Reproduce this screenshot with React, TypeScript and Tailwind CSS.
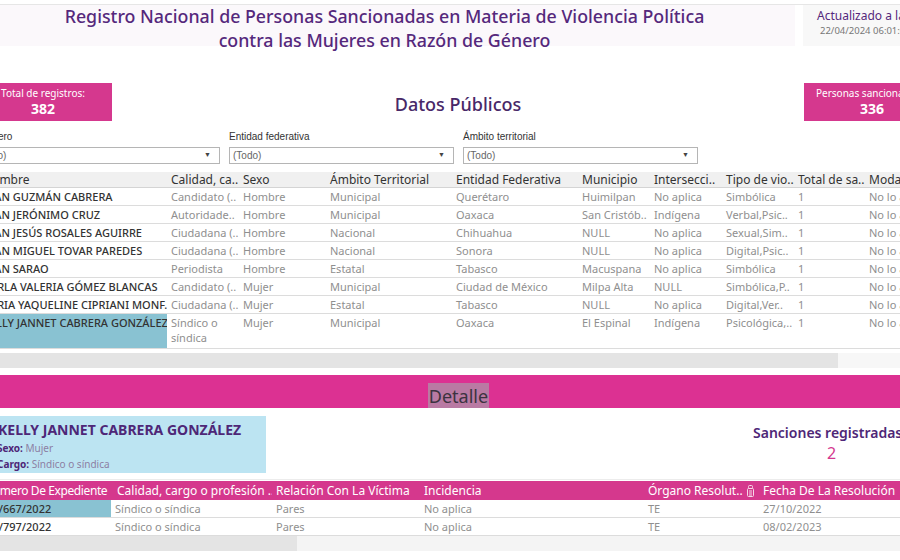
import React from "react";

const topCols = [
  { w: 188, label: "Nombre" },
  { w: 72, label: "Calidad, ca.." },
  { w: 87, label: "Sexo" },
  { w: 126, label: "Ámbito Territorial" },
  { w: 126, label: "Entidad Federativa" },
  { w: 72, label: "Municipio" },
  { w: 72, label: "Intersecci.." },
  { w: 72, label: "Tipo de vio.." },
  { w: 71, label: "Total de sa.." },
  { w: 80, label: "Modalidad" },
];

const rows: string[][] = [
  ["JUAN GUZMÁN CABRERA", "Candidato (..", "Hombre", "Municipal", "Querétaro", "Huimilpan", "No aplica", "Simbólica", "1", "No lo aplica"],
  ["JUAN JERÓNIMO CRUZ", "Autoridade..", "Hombre", "Municipal", "Oaxaca", "San Cristób..", "Indígena", "Verbal,Psic..", "1", "No lo aplica"],
  ["JUAN JESÚS ROSALES AGUIRRE", "Ciudadana (..", "Hombre", "Nacional", "Chihuahua", "NULL", "No aplica", "Sexual,Sim..", "1", "No lo aplica"],
  ["JUAN MIGUEL TOVAR PAREDES", "Ciudadana (..", "Hombre", "Nacional", "Sonora", "NULL", "No aplica", "Digital,Psic..", "1", "No lo aplica"],
  ["JUAN SARAO", "Periodista", "Hombre", "Estatal", "Tabasco", "Macuspana", "No aplica", "Simbólica", "1", "No lo aplica"],
  ["KARLA VALERIA GÓMEZ BLANCAS", "Candidato (..", "Mujer", "Municipal", "Ciudad de México", "Milpa Alta", "NULL", "Simbólica,P..", "1", "No lo aplica"],
  ["KARIA YAQUELINE CIPRIANI MONF..", "Ciudadana (..", "Mujer", "Estatal", "Tabasco", "NULL", "No aplica", "Digital,Ver..", "1", "No lo aplica"],
];

const botCols = [
  { w: 133, label: "Número De Expediente" },
  { w: 159, label: "Calidad, cargo o profesión .." },
  { w: 148, label: "Relación Con La Víctima" },
  { w: 224, label: "Incidencia" },
  { w: 115, label: "Órgano Resolut.." },
  { w: 141, label: "Fecha De La Resolución" },
];

const botRows = [
  ["SUP-JE/667/2022", "Síndico o síndica", "Pares", "No aplica", "TE", "27/10/2022"],
  ["SUP-JE/797/2022", "Síndico o síndica", "Pares", "No aplica", "TE", "08/02/2023"],
];

function Select({ w, label, clip }: { w: number; label: string; clip?: boolean }) {
  return (
    <div style={{ width: w }} className="flex flex-col gap-[3px]">
      <div className={`h-[14px] text-[10px] leading-[14px] text-[#333] ${clip ? "pl-[5px]" : ""}`}>{label}</div>
      <div className="h-[17px] border border-[#b5b5b5] bg-white flex items-center justify-between pl-[3px] pr-[8px] text-[10px] text-[#666]">
        <span>(Todo)</span>
        <span className="text-[7px] text-[#444]">▼</span>
      </div>
    </div>
  );
}

export default function App() {
  return (
    <div
      className="w-[900px] h-[560px] overflow-hidden bg-white relative"
      style={{ fontFamily: '"Noto Sans", sans-serif' }}
    >
      <div className="h-[4px]" />
      <div className="h-px bg-[#e6e6e6]" />
      {/* Header */}
      <div className="flex h-[41px] gap-[8px]">
        <div className="w-[795px] bg-[#fbf8fb] flex flex-col items-center justify-center pt-[4px] pr-[26px] text-[#55287c] text-[17.8px] font-medium leading-[24px]">
          <div>Registro Nacional de Personas Sancionadas en Materia de Violencia Política</div>
          <div>contra las Mujeres en Razón de Género</div>
        </div>
        <div className="flex-1 bg-[#f8f8f8] pl-[14px] pt-[3px] whitespace-nowrap overflow-hidden">
          <div className="text-[12px] leading-[16px] text-[#55287c]">Actualizado a la fecha</div>
          <div className="text-[9.5px] leading-[13px] text-[#777] pl-[3px]">22/04/2024 06:01:00</div>
        </div>
      </div>

      {/* KPI row */}
      <div className="flex items-center h-[38px] mt-[37px]">
        <div className="w-[112px] h-[38px] bg-[#d5388e] flex flex-col items-center justify-center text-white pr-[26px] whitespace-nowrap">
          <div className="text-[10px] leading-[13px]">Total de registros:</div>
          <div className="text-[14px] leading-[18px] font-bold">382</div>
        </div>
        <div className="flex-1 text-center text-[18px] font-medium text-[#482868] pt-[4px]">Datos Públicos</div>
        <div className="w-[96px] h-[38px] bg-[#d5388e] flex flex-col items-start justify-center text-white overflow-hidden whitespace-nowrap pl-[12px]">
          <div className="text-[10px] leading-[13px]">Personas sancionadas:</div>
          <div className="text-[14px] leading-[18px] font-bold pl-[44px]">336</div>
        </div>
      </div>

      {/* Filters */}
      <div className="flex gap-[9px] ml-[-26px] mt-[9px]" style={{ fontFamily: '"Liberation Sans", Arial, sans-serif' }}>
        <Select w={246} label="Género" clip />
        <Select w={225} label="Entidad federativa" />
        <Select w={235} label="Ámbito territorial" />
      </div>

      {/* Top table */}
      <div className="mt-[8px] overflow-hidden">
        <div className="ml-[-21px] w-[1000px]">
          <div className="flex h-[16px] bg-[#f0f0f0] border-b border-[#d4d4d4] text-[12px] leading-[16px] text-[#333]">
            {topCols.map((c, i) => (
              <div key={i} style={{ width: c.w }} className="px-[4px] whitespace-nowrap overflow-hidden">
                {c.label}
              </div>
            ))}
          </div>
          {rows.map((r, ri) => (
            <div key={ri} className="flex h-[18px] border-b border-[#dcdcdc] text-[11px] leading-[17px]">
              {r.map((v, ci) => (
                <div
                  key={ci}
                  style={{ width: topCols[ci].w }}
                  className={`px-[4px] whitespace-nowrap overflow-hidden ${ci === 0 ? "text-[#333] font-medium" : "text-[#8f8f8f]"}`}
                >
                  {v}
                </div>
              ))}
            </div>
          ))}
          <div className="flex h-[35px] border-b border-[#dcdcdc] text-[11px] leading-[15px]">
            <div style={{ width: 188 }} className="px-[4px] pt-[1px] whitespace-nowrap overflow-hidden bg-[#89c2d2] text-[#333] font-medium">
              KELLY JANNET CABRERA GONZÁLEZ
            </div>
            <div style={{ width: 72 }} className="px-[4px] pt-[1px] text-[#8f8f8f]">
              Síndico o<br />síndica
            </div>
            {["Mujer", "Municipal", "Oaxaca", "El Espinal", "Indígena", "Psicológica,..", "1", "No lo aplica"].map((v, i) => (
              <div key={i} style={{ width: topCols[i + 2].w }} className="px-[4px] pt-[1px] whitespace-nowrap overflow-hidden text-[#8f8f8f]">
                {v}
              </div>
            ))}
          </div>
        </div>
      </div>
      <div className="flex h-[15px] mt-[4px]">
        <div className="w-[838px] bg-[#e4e4e4]" />
        <div className="flex-1 bg-[#f7f7f7]" />
      </div>

      {/* Detalle band */}
      <div className="mt-[7px] h-[33px] bg-[#dc3192] flex justify-center items-end">
        <div className="h-[25px] px-[1px] bg-[#b97aa3] text-[18px] leading-[26px] text-[#3b3340] ml-[17px]">Detalle</div>
      </div>

      {/* Detail content */}
      <div className="flex mt-[8px] h-[57px]">
        <div className="w-[266px] bg-[#bce4f2] pt-[4px] overflow-hidden">
          <div className="ml-[-2px] text-[14px] leading-[20px] font-bold text-[#4e2777] whitespace-nowrap">KELLY JANNET CABRERA GONZÁLEZ</div>
          <div className="ml-[-3px] text-[10px] leading-[16px] text-[#8c7fa3]">
            <span className="font-bold text-[#4e2777]">Sexo:</span> Mujer
          </div>
          <div className="ml-[-3px] text-[10px] leading-[16px] text-[#8c7fa3]">
            <span className="font-bold text-[#4e2777]">Cargo:</span> Síndico o síndica
          </div>
        </div>
        <div className="flex-1 flex justify-end">
          <div className="w-[164px] pl-[17px] pt-[7px] whitespace-nowrap overflow-hidden">
            <div className="text-[14px] leading-[19px] font-semibold text-[#4e2777]">Sanciones registradas</div>
            <div className="text-[16px] leading-[22px] text-[#d4388e] pl-[74px]">2</div>
          </div>
        </div>
      </div>
      <div className="h-px bg-[#ececec] mt-[6px]" />

      {/* Bottom table */}
      <div className="mt-[1px] overflow-hidden">
        <div className="ml-[-20px] w-[1000px]">
          <div className="flex h-[19px] bg-[#d5388d] text-[12px] leading-[19px] text-white">
            {botCols.map((c, i) => (
              <div
                key={i}
                style={{ width: c.w }}
                className={`px-[4px] whitespace-nowrap overflow-hidden flex items-center gap-[4px] ${i === 0 ? "tracking-[-0.4px]" : ""}`}
              >
                {c.label}
                {i === 4 && (
                  <svg width="7" height="12" viewBox="0 0 7 12" className="opacity-80">
                    <rect x="1.5" y="0.5" width="4" height="3" rx="1" fill="none" stroke="white" strokeWidth="1" />
                    <rect x="0.5" y="3.5" width="6" height="8" rx="1" fill="none" stroke="white" strokeWidth="1" />
                    <line x1="2" y1="6" x2="5" y2="6" stroke="white" strokeWidth="1" />
                    <line x1="2" y1="8" x2="5" y2="8" stroke="white" strokeWidth="1" />
                    <line x1="2" y1="10" x2="5" y2="10" stroke="white" strokeWidth="1" />
                  </svg>
                )}
              </div>
            ))}
          </div>
          {botRows.map((r, ri) => (
            <div key={ri} className="flex h-[18px] border-b border-[#dcdcdc] text-[11px] leading-[17px]">
              {r.map((v, ci) => (
                <div
                  key={ci}
                  style={{ width: ci === 0 ? 131 : ci === 1 ? botCols[1].w + 2 : botCols[ci].w }}
                  className={`whitespace-nowrap overflow-hidden ${ci === 0 ? "text-[#333] font-medium" : "px-[4px] text-[#8f8f8f]"} ${ci === 0 && ri === 0 ? "bg-[#89c2d2]" : ""}`}
                >
                  {ci === 0 ? <span className="block ml-[-15px]">{v}</span> : v}
                </div>
              ))}
            </div>
          ))}
        </div>
      </div>
      <div className="flex h-[15px]">
        <div className="w-[297px] bg-[#e4e4e4]" />
        <div className="flex-1 bg-[#f4f4f4]" />
      </div>
    </div>
  );
}
